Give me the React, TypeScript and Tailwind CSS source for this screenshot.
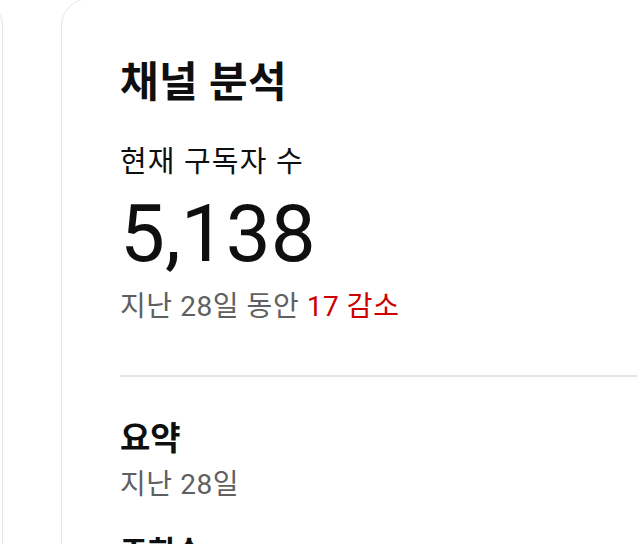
const font = { fontFamily: "Roboto, 'Noto Sans CJK KR', sans-serif" };

function SideCard() {
  return <div className="-ml-[297px] h-[620px] w-[300px] shrink-0 rounded-[28px] border border-[#e5e5e5] bg-white" />;
}

export default function App() {
  return (
    <div className="h-[544px] w-[637px] overflow-hidden bg-white text-[#0f0f0f]" style={font}>
      <div className="-mt-[2px] flex gap-[58px]">
        <SideCard />
        <section className="h-[620px] w-[700px] shrink-0 rounded-[28px] border border-[#e5e5e5] bg-white pl-[58px] pt-[58px]">
          <h1 className="text-[42px] font-bold leading-[52px] tracking-[0.01em]">채널 분석</h1>

          <div className="mt-[34px] text-[29px] leading-[38px] tracking-[0.04em]">현재 구독자 수</div>
          <div className="mt-[9px] text-[80px] leading-[88px]">5,138</div>
          <div className="mt-[11px] text-[28px] leading-[36px] tracking-[0.02em] text-[#606060]">
            지난 28일 동안 <span className="text-[#c00]">17 감소</span>
          </div>

          <div className="mt-[50px] h-[2px] bg-[#e5e5e5]" />

          <h2 className="mt-[41px] text-[33px] font-bold leading-[42px]">요약</h2>
          <div className="mt-[7px] text-[28px] leading-[36px] tracking-[0.02em] text-[#606060]">지난 28일</div>
          <h3 className="mt-[29px] text-[30px] font-bold leading-[40px]">조회수</h3>
        </section>
      </div>
    </div>
  );
}
